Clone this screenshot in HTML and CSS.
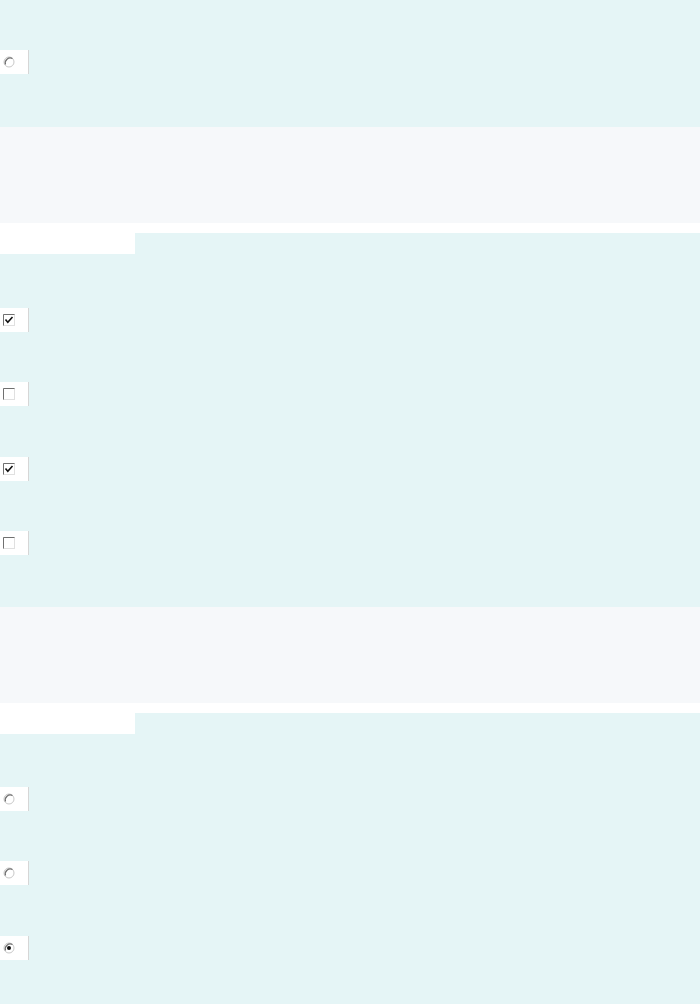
FILE: index.html
```html
<!DOCTYPE html>
<html>
<head>
    <title>Opzioni</title>
    <link rel="stylesheet" href="styles.css">
</head>
<body>
    <div class="sezione primo">
        <label class="scelta">
            <svg class="radio" width="12" height="12" viewBox="0 0 12 12">
                <circle cx="6" cy="6" r="5" fill="#fff" stroke="#c8c8c8"/>
                <path d="M2.5 8.5 A5 5 0 0 1 9.5 2.5" fill="none" stroke="#707070" stroke-width="1.2"/>
            </svg>
        </label>
    </div>
    <div class="fascia"></div>
    <div class="testata"></div>
    <div class="sezione elenco spunte">
        <label class="scelta">
            <svg class="spunta" width="12" height="12" viewBox="0 0 12 12">
                <rect x="0.5" y="0.5" width="11" height="11" fill="#fff" stroke="#e0e0e0"/>
                <path d="M0.5 11.5 V0.5 H11.5" fill="none" stroke="#707070"/>
                <path d="M2.5 5.5 L4.8 8.2 L9.5 3" fill="none" stroke="#111" stroke-width="1.6"/>
            </svg>
        </label>
        <label class="scelta">
            <svg class="spunta" width="12" height="12" viewBox="0 0 12 12">
                <rect x="0.5" y="0.5" width="11" height="11" fill="#fff" stroke="#e0e0e0"/>
                <path d="M0.5 11.5 V0.5 H11.5" fill="none" stroke="#707070"/>
            </svg>
        </label>
        <label class="scelta">
            <svg class="spunta" width="12" height="12" viewBox="0 0 12 12">
                <rect x="0.5" y="0.5" width="11" height="11" fill="#fff" stroke="#e0e0e0"/>
                <path d="M0.5 11.5 V0.5 H11.5" fill="none" stroke="#707070"/>
                <path d="M2.5 5.5 L4.8 8.2 L9.5 3" fill="none" stroke="#111" stroke-width="1.6"/>
            </svg>
        </label>
        <label class="scelta">
            <svg class="spunta" width="12" height="12" viewBox="0 0 12 12">
                <rect x="0.5" y="0.5" width="11" height="11" fill="#fff" stroke="#e0e0e0"/>
                <path d="M0.5 11.5 V0.5 H11.5" fill="none" stroke="#707070"/>
            </svg>
        </label>
    </div>
    <div class="fascia"></div>
    <div class="testata"></div>
    <div class="sezione elenco radi">
        <label class="scelta">
            <svg class="radio" width="12" height="12" viewBox="0 0 12 12">
                <circle cx="6" cy="6" r="5" fill="#fff" stroke="#c8c8c8"/>
                <path d="M2.5 8.5 A5 5 0 0 1 9.5 2.5" fill="none" stroke="#707070" stroke-width="1.2"/>
            </svg>
        </label>
        <label class="scelta">
            <svg class="radio" width="12" height="12" viewBox="0 0 12 12">
                <circle cx="6" cy="6" r="5" fill="#fff" stroke="#c8c8c8"/>
                <path d="M2.5 8.5 A5 5 0 0 1 9.5 2.5" fill="none" stroke="#707070" stroke-width="1.2"/>
            </svg>
        </label>
        <label class="scelta">
            <svg class="radio" width="12" height="12" viewBox="0 0 12 12">
                <circle cx="6" cy="6" r="5" fill="#fff" stroke="#c8c8c8"/>
                <path d="M2.5 8.5 A5 5 0 0 1 9.5 2.5" fill="none" stroke="#707070" stroke-width="1.2"/>
                <circle cx="6" cy="6" r="2" fill="#111"/>
            </svg>
        </label>
    </div>
</body>
</html>
```

FILE: styles.css
```css
* {
    box-sizing: border-box;
}
body {
    margin: 0;
    background-color: #e5f5f6;
    font-family: "Liberation Sans", Arial, sans-serif;
}
.sezione {
    display: flex;
    flex-direction: column;
}
.primo {
    height: 127px;
    padding-top: 50px;
}
.spunte {
    gap: 50.33px;
    padding-top: 54px;
    padding-bottom: 52px;
}
.radi {
    gap: 50.5px;
    padding-top: 53px;
}
.scelta {
    display: flex;
    align-items: center;
    width: 29px;
    height: 24px;
    padding-left: 3px;
    background-color: #fff;
    border-right: 1px solid #d6d6d6;
}
.fascia {
    height: 96px;
    background-color: #f6f8fa;
}
.testata {
    height: 31px;
    background: linear-gradient(#fff, #fff) 0 0 / 100% 10px no-repeat,
                linear-gradient(#fff, #fff) 0 0 / 135px 100% no-repeat;
}
```
